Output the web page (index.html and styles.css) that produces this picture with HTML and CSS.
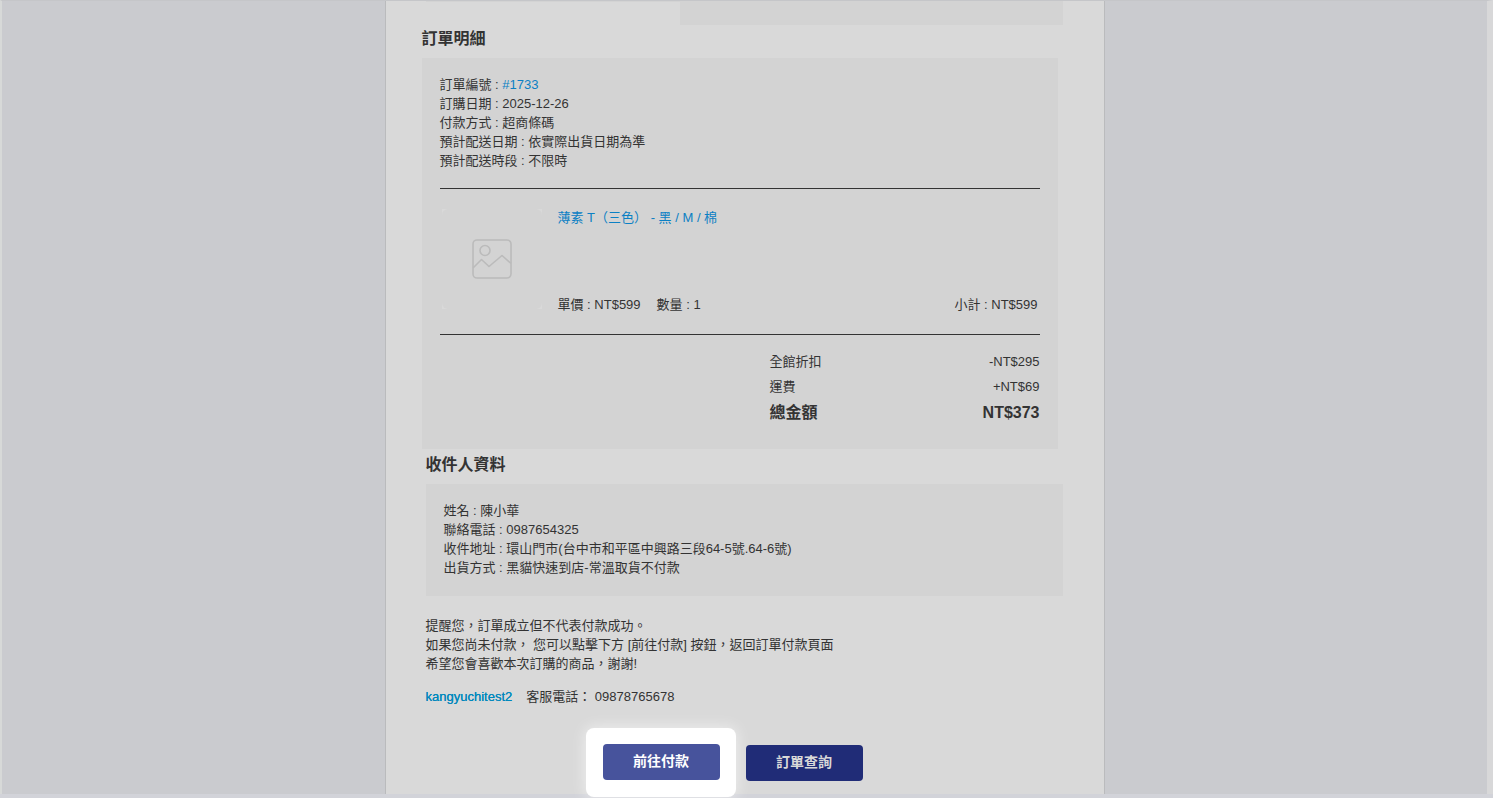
FILE: index.html
```html
<!DOCTYPE html>
<html lang="zh-Hant">
<head>
    <meta charset="UTF-8">
    <meta name="viewport" content="width=device-width, initial-scale=1.0">
    <title>訂單明細</title>
    <link rel="stylesheet" href="styles.css">
</head>
<body>
    <div class="mail-area">
        <main class="mail">
            <div class="summary">
                <div class="summary-label"></div>
                <div class="summary-value"></div>
            </div>

            <!-- Order details -->
            <section class="order">
                <h2>訂單明細</h2>
                <div class="box">
                    <p>訂單編號 : <a href="#1733">#1733</a></p>
                    <p>訂購日期 : 2025-12-26</p>
                    <p>付款方式 : 超商條碼</p>
                    <p>預計配送日期 : 依實際出貨日期為準</p>
                    <p>預計配送時段 : 不限時</p>

                    <div class="item">
                        <div class="item-image">
                            <svg width="100" height="100" viewBox="0 0 100 100" fill="none" stroke-linejoin="round">
                                <rect width="100" height="100" fill="#d9d9d9"/>
                                <rect width="100" height="100" rx="6" fill="#d3d3d3"/>
                                <g stroke="#bbbbbb" stroke-width="1.6">
                                    <rect x="31" y="31" width="38" height="38" rx="4"/>
                                    <circle cx="43" cy="41.500" r="5"/>
                                    <path d="M31 59 L39.500 50.500 L47 57.500 L60 46.500 L69 54.500"/>
                                </g>
                            </svg>
                        </div>
                        <div class="item-info">
                            <a href="#item">薄素 T（三色） - 黑 / M / 棉</a>
                            <div class="item-price">
                                <span>單價 : NT$599</span>
                                <span>數量 : 1</span>
                                <span class="subtotal">小計 : NT$599</span>
                            </div>
                        </div>
                    </div>

                    <table class="totals">
                        <tr><th scope="row">全館折扣</th><td>-NT$295</td></tr>
                        <tr><th scope="row">運費</th><td>+NT$69</td></tr>
                        <tr class="grand"><th scope="row">總金額</th><td>NT$373</td></tr>
                    </table>
                </div>
            </section>

            <!-- Recipient -->
            <section class="recipient">
                <h2>收件人資料</h2>
                <div class="box">
                    <p>姓名 : 陳小華</p>
                    <p>聯絡電話 : 0987654325</p>
                    <p>收件地址 : 環山門市(台中市和平區中興路三段64-5號.64-6號)</p>
                    <p>出貨方式 : 黑貓快速到店-常溫取貨不付款</p>
                </div>
            </section>

            <div class="notes">
                <p>提醒您，訂單成立但不代表付款成功。</p>
                <p>如果您尚未付款， 您可以點擊下方 [前往付款] 按鈕，返回訂單付款頁面</p>
                <p>希望您會喜歡本次訂購的商品，謝謝!</p>
            </div>
            <div class="contact">
                <a href="#shop">kangyuchitest2</a>
                <span>客服電話： 09878765678</span>
            </div>

            <div class="actions">
                <div class="spotlight">
                    <button type="button" class="btn btn-pay">前往付款</button>
                </div>
                <button type="button" class="btn">訂單查詢</button>
            </div>
        </main>
    </div>
</body>
</html>
```
FILE: styles.css
```css
* {
    box-sizing: border-box;
}
html, body {
    height: 100%;
    margin: 0;
}
body {
    font-family: "Liberation Sans", "Noto Sans CJK TC", sans-serif;
    font-size: 13px;
    line-height: 19px;
    color: #333;
    background-color: #d2d3d9;
    padding-bottom: 4px;
    overflow: hidden;
}
p, h2 {
    margin: 0;
}
a {
    color: #0b80c4;
    text-decoration: none;
}
.mail-area {
    height: 100%;
    background-color: #cacbcf;
    border-top: 1px solid #c5c6c9;
    border-left: 2px solid #d7d9d8;
    border-right: 6px solid #d8d8d9;
}
.mail {
    max-width: 720px;
    height: 100%;
    margin: 0 auto;
    padding: 0 41px 0 40px;
    background-color: #d9d9d9;
    border-left: 1px solid #babbbd;
    border-right: 1px solid #babbbd;
}
.summary {
    display: flex;
    align-items: flex-start;
    height: 24px;
}
.summary-label {
    flex: 2;
    height: 1px;
    background-color: #d3d3d3;
}
.summary-value {
    flex: 3;
    height: 24px;
    background-color: #d3d3d3;
}
h2 {
    font-size: 16px;
    line-height: 27px;
    margin-bottom: 6px;
}
.box {
    padding: 17px 18px 19px;
    background-color: #d3d3d3;
}
.order {
    margin-left: -4px;
    margin-right: 5px;
}
.recipient {
    padding-top: 2px;
}

/* Item row */
.item {
    display: flex;
    gap: 16px;
    margin-top: 18px;
    padding: 19px 0 20px;
    border-top: 1px solid #333;
    border-bottom: 1px solid #333;
}
.item-image {
    width: 102px;
    padding: 1px 0 0 2px;
}
.item-image svg {
    display: block;
}
.item-info {
    display: flex;
    flex-direction: column;
    justify-content: space-between;
    flex: 1;
    height: 106px;
}
.item-price {
    display: flex;
    gap: 16px;
    padding-right: 2px;
}
.subtotal {
    margin-left: auto;
}
.totals {
    width: 45%;
    margin: 14px 0 4px auto;
    border-collapse: collapse;
}
.totals th, .totals td {
    height: 25px;
    padding: 0;
    font-weight: normal;
    text-align: left;
}
.totals td {
    text-align: right;
}
.totals .grand th, .totals .grand td {
    height: 27px;
    font-size: 16px;
    font-weight: bold;
}

/* Notes and contact */
.notes {
    margin-top: 20px;
}
.contact {
    display: flex;
    gap: 14px;
    margin-top: 14px;
}
.contact a {
    color: #0088bd;
    text-shadow: 0 0 0 #0088bd;
}

/* Buttons */
.actions {
    display: flex;
    justify-content: center;
    align-items: center;
    gap: 10px;
    margin-top: 22px;
    padding-right: 40px;
}
.spotlight {
    padding: 16px 16px 17px 17px;
    background-color: #fff;
    border-radius: 8px;
    box-shadow: 0 0 14px 2px rgba(255, 255, 255, 0.5);
}
.btn {
    display: block;
    width: 117px;
    height: 36px;
    padding: 0 0 4px;
    border: none;
    border-radius: 4px;
    background-color: #202c77;
    color: #d9d9d9;
    font-family: inherit;
    font-size: 14px;
    font-weight: bold;
    cursor: pointer;
}
.btn-pay {
    background-color: #47539c;
    color: #fff;
}
```
